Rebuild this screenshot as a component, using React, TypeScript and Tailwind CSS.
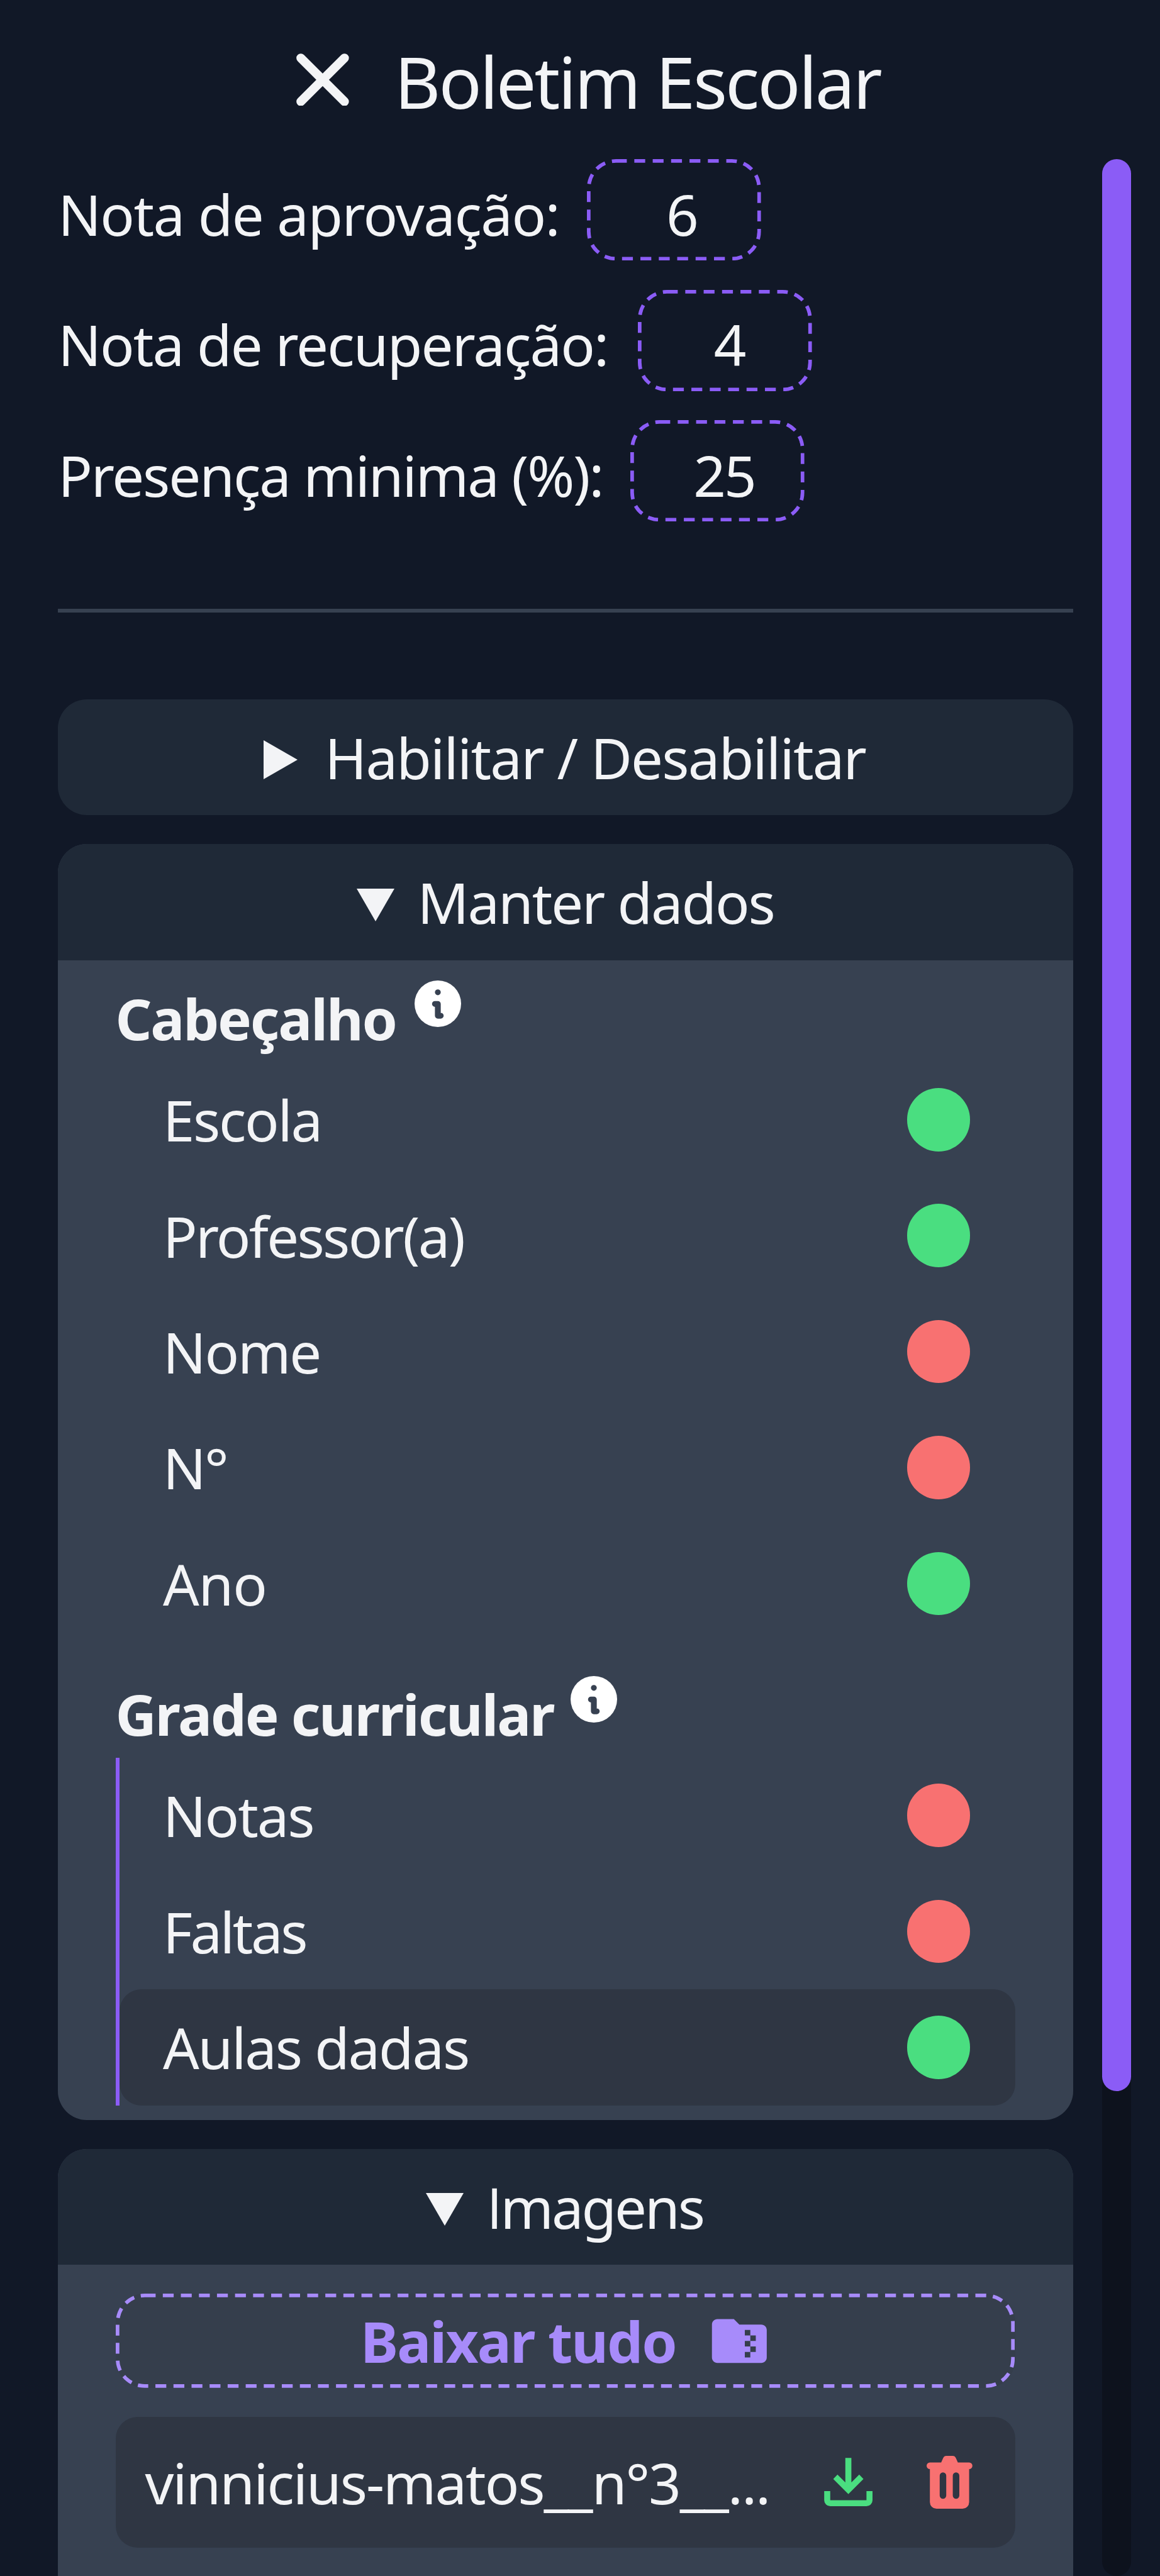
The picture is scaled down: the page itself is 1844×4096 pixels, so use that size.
import type { ReactNode } from "react";
import { MdFolderZip } from "react-icons/md";

function CloseIcon() {
  return (
    <svg viewBox="0 0 291 291" className="size-[83.8px] shrink-0" fill="none" stroke="currentColor" strokeWidth="49" strokeLinecap="round">
      <path d="M25 25 266 266M266 25 25 266" />
    </svg>
  );
}

function InfoIcon() {
  return (
    <svg viewBox="0 0 256 256" className="mt-[9px] size-[74px] shrink-0">
      <circle cx="128" cy="128" r="128" fill="#ffffff" />
      <circle cx="128" cy="65" r="16" fill="#374151" />
      <path d="M112 129h16v65h16" fill="none" stroke="#374151" strokeWidth="32" strokeLinecap="round" strokeLinejoin="round" />
    </svg>
  );
}

function DownloadIcon() {
  return (
    <svg viewBox="0 0 24 24" className="size-[115.2px] shrink-0 text-[#4ade80]" fill="currentColor">
      <path d="m12 16-5-5 1.4-1.45 2.6 2.6V4h2v8.15l2.6-2.6L17 11l-5 5Zm-6 4a2 2 0 0 1-2-2v-3h2v3h12v-3h2v3a2 2 0 0 1-2 2H6Z" />
    </svg>
  );
}

function TrashIcon() {
  return (
    <svg viewBox="0 0 14 16" preserveAspectRatio="none" className="h-[84px] w-[72.8px] shrink-0 text-[#f87171]" fill="currentColor">
      <path
        fillRule="evenodd"
        d="M4.45 2 5.05.65C5.25.2 5.6 0 6 0h2c.4 0 .75.2.95.65L9.55 2H13a1 1 0 0 1 0 2v10a2 2 0 0 1-2 2H3a2 2 0 0 1-2-2V4a1 1 0 0 1 0-2ZM5 5a1 1 0 0 0-1 1v6a1 1 0 0 0 2 0V6a1 1 0 0 0-1-1Zm4 0a1 1 0 0 0-1 1v6a1 1 0 0 0 2 0V6a1 1 0 0 0-1-1Z"
      />
    </svg>
  );
}

function Field({ label, value, labelClass, valueClass }: { label: string; value: string; labelClass: string; valueClass: string }) {
  return (
    <div className="flex h-[161.35px] items-center">
      <label className={`shrink-0 whitespace-nowrap pt-[12px] ${labelClass}`}>{label}</label>
      <div className={`relative flex h-full w-[276.6px] items-center justify-center pt-[12px] ${valueClass}`}>
        <span className="absolute left-0 top-0 h-[28px] w-[48px] origin-top-left scale-[5.7625] rounded-[8px] border border-dashed border-[#8b5cf6]" />
        {value}
      </div>
    </div>
  );
}

function Summary({ open, className, children }: { open: boolean; className: string; children: ReactNode }) {
  return (
    <div className={`flex h-[184.4px] items-center justify-center bg-[#1f2937] ${className}`}>
      {open ? (
        <svg viewBox="0 0 60 52" className="mr-[36.5px] mt-[8px] h-[52px] w-[60px]" fill="currentColor">
          <path d="M0 0h60L30 52Z" />
        </svg>
      ) : (
        <svg viewBox="0 0 54 62" className="mr-[43.5px] mt-[8px] h-[62px] w-[54px]" fill="currentColor">
          <path d="M0 0v62l54-31Z" />
        </svg>
      )}
      <span className="whitespace-nowrap">{children}</span>
    </div>
  );
}

function Heading({ children, className }: { children: string; className: string }) {
  return (
    <div className="-ml-px flex h-[138.3px] items-start font-bold leading-[138.3px]">
      <span className={className}>{children}</span>
      <InfoIcon />
    </div>
  );
}

function Toggle({ label, on, active, className }: { label: string; on: boolean; active?: boolean; className: string }) {
  return (
    <div className={`flex h-[184.4px] items-center justify-between rounded-[34.6px] pl-[68.6px] pr-[71.2px] ${active ? "bg-[#2f3643]" : ""}`}>
      <span className={className}>{label}</span>
      <span className={`size-[100.6px] rounded-full ${on ? "bg-[#4ade80]" : "bg-[#f87171]"}`} />
    </div>
  );
}

export default function App() {
  return (
    <div className="flex h-[4096px] w-[1844px] flex-col overflow-hidden bg-[#111827] font-['Noto_Sans',sans-serif] text-[90.4px] leading-none text-[#f3f4f6]">
      <header className="flex h-[253.4px] shrink-0 items-start pl-[471.2px] pt-[84.7px]">
        <CloseIcon />
        <h1 className="-mt-[11.8px] ml-[72px] whitespace-nowrap text-[113px] leading-[113px] tracking-[-3.05px]">Boletim Escolar</h1>
      </header>

      <div className="flex min-h-0 flex-1">
        <main className="ml-[92.2px] w-[1613.5px] shrink-0">
          <div className="flex flex-col gap-[46.1px]">
            <Field label="Nota de aprovação:" value="6" labelClass="w-[840.8px] tracking-[-1.53px]" valueClass="pl-[27px]" />
            <Field label="Nota de recuperação:" value="4" labelClass="w-[922px] tracking-[-1.88px]" valueClass="pl-[16px]" />
            <Field label="Presença minima (%):" value="25" labelClass="w-[910px] tracking-[-2.1px]" valueClass="pl-[21px] tracking-[-3px]" />
          </div>

          <hr className="my-[138.2px] h-[6px] border-0 bg-[#374151]" />

          <Summary open={false} className="rounded-[46.1px] pr-[3px] tracking-[-1.82px]">
            Habilitar / Desabilitar
          </Summary>

          <section className="mt-[46.1px] overflow-hidden rounded-[46.1px] bg-[#374151]">
            <Summary open className="tracking-[-2.14px]">
              Manter dados
            </Summary>
            <div className="px-[92.2px] py-[23px]">
              <Heading className="mr-[29.4px] tracking-[-2.2px]">Cabeçalho</Heading>
              <div className="border-l-[6px] border-transparent">
                <Toggle label="Escola" on className="tracking-[-2.3px]" />
                <Toggle label="Professor(a)" on className="tracking-[-2.7px]" />
                <Toggle label="Nome" on={false} className="tracking-[-2.2px]" />
                <Toggle label="N°" on={false} className="tracking-[-2.6px]" />
                <Toggle label="Ano" on className="tracking-[-1.2px]" />
              </div>
              <div className="h-[46.1px]" />
              <Heading className="mr-[26.7px] tracking-[-2.25px]">Grade curricular</Heading>
              <div className="border-l-[6px] border-[#8b5cf6]">
                <Toggle label="Notas" on={false} className="tracking-[-2.1px]" />
                <Toggle label="Faltas" on={false} className="tracking-[-3.4px]" />
                <Toggle label="Aulas dadas" on active className="tracking-[-2.2px]" />
              </div>
            </div>
          </section>

          <section className="mt-[46.1px] h-[900px] overflow-hidden rounded-[46.1px] bg-[#374151]">
            <Summary open className="pr-[3px] tracking-[-3.1px]">
              <span className="font-['Open_Sans']">I</span>magens
            </Summary>
            <div className="px-[92.2px] pt-[46.1px]">
              <div className="relative flex h-[149.8px] items-center justify-center rounded-[46.1px] bg-[#353e4c] pl-[3px] font-bold text-[#a78bfa]">
                <span className="absolute left-0 top-0 h-[26px] w-[248px] origin-top-left scale-[5.7625] rounded-[8px] border border-dashed border-[#a78bfa]" />
                <span className="mr-[48.6px] tracking-[-1.95px]">Baixar tudo</span>
                <MdFolderZip className="size-[104.6px]" />
              </div>
              <div className="mt-[46.1px] flex h-[207.4px] items-center rounded-[34.6px] bg-[#2f3643] pl-[46.1px] pr-[67.6px]">
                <span className="flex-1 whitespace-nowrap tracking-[-2.07px]">vinnicius-matos__n°3__...</span>
                <DownloadIcon />
                <span className="w-[67.3px]" />
                <TrashIcon />
              </div>
            </div>
          </section>
        </main>

        <div className="ml-[46.1px] h-[3842.6px] w-[46.1px] shrink-0 rounded-full bg-[#0d121d]">
          <div className="h-[3072px] rounded-full bg-[#8b5cf6]" />
        </div>
      </div>
    </div>
  );
}
